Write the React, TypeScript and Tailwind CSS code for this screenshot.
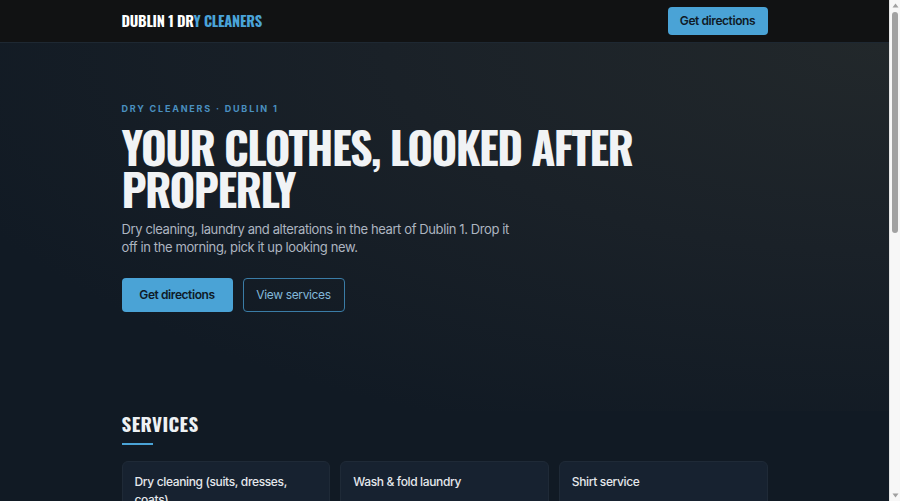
import React from "react";

const display = { fontFamily: "'Oswald', 'Liberation Sans Narrow', 'DejaVu Sans Condensed', sans-serif" };
const body = { fontFamily: "Inter, 'Noto Sans', sans-serif" };

function FakeScrollbar() {
  return (
    <div className="w-[11px] h-[501px] shrink-0 bg-[#f7f7f7] border-l border-[#e6e6e6] flex flex-col items-center">
      <svg width="7" height="5" viewBox="0 0 7 5" className="mt-[3px]">
        <path d="M3.5 0.5 L6.5 4.5 L0.5 4.5 Z" fill="#a0a0a0" />
      </svg>
      <div className="mt-[4px] h-[221px] w-[6px] rounded-full bg-[#a2a2a2]" />
      <div className="flex-1" />
      <svg width="7" height="5" viewBox="0 0 7 5" className="mb-[3px]">
        <path d="M0.5 0.5 L6.5 0.5 L3.5 4.5 Z" fill="#a0a0a0" />
      </svg>
    </div>
  );
}

export default function App() {
  return (
    <div className="flex h-[501px] overflow-hidden bg-[#111a24]">
      <main className="w-[889px] shrink-0 overflow-hidden text-white" style={body}>
        <header className="h-[43px] bg-[#111213] border-b border-[#1e2832]">
          <div className="mx-auto w-[646px] h-full flex items-center justify-between">
            <div className="text-[14.5px] font-bold tracking-[-0.015em] leading-none" style={display}>
              <span className="text-white">DUBLIN 1 DR</span>
              <span className="text-[#4aa3d8]">Y CLEANERS</span>
            </div>
            <button className="h-[28px] w-[100px] rounded-[4px] bg-[#4aa3d6] text-[#0f1a26] text-[12px] tracking-[-0.035em] font-semibold">
              Get directions
            </button>
          </div>
        </header>
        <section className="bg-[radial-gradient(ellipse_at_top_right,#22282b_0%,#1a2128_40%,#111a24_80%)]">
          <div className="mx-auto w-[646px] pt-[58px] pb-[99px]">
            <div className="text-[9px] font-bold tracking-[0.2em] text-[#4a90c0] leading-[16px]">
              DRY CLEANERS · DUBLIN 1
            </div>
            <h1 className="mt-[9px] text-[44px] font-bold tracking-[-0.035em] leading-[42px] text-[#f1f3f5]" style={display}>
              YOUR CLOTHES, LOOKED AFTER
              <br />
              PROPERLY
            </h1>
            <p className="mt-[10px] w-[400px] text-[13px] tracking-[-0.03em] leading-[18px] text-[#adb5c0]">
              Dry cleaning, laundry and alterations in the heart of Dublin 1. Drop it off in the morning, pick it up looking new.
            </p>
            <div className="mt-[22px] flex gap-[10px]">
              <button className="h-[34px] w-[111px] rounded-[4px] bg-[#4aa3d6] text-[#0f1a26] text-[12px] tracking-[-0.035em] font-semibold">
                Get directions
              </button>
              <button className="h-[34px] w-[102px] rounded-[4px] border border-[#3a7ca6] text-[#82b8da] text-[12px] tracking-[-0.03em]">
                View services
              </button>
            </div>
          </div>
        </section>
        <section className="mx-auto w-[646px]">
          <h2 className="text-[19px] font-bold tracking-[0.02em] leading-[24px] text-[#eef1f4]" style={display}>
            SERVICES
          </h2>
          <div className="mt-[8px] h-[2px] w-[31px] bg-[#4aa3d6]" />
          <div className="mt-[16px] grid grid-cols-3 gap-[10px]">
            {["Dry cleaning (suits, dresses, coats)", "Wash & fold laundry", "Shirt service"].map((t) => (
              <div key={t} className="h-[140px] rounded-[6px] border border-[#1f2a37] bg-[#172230] px-[12px] pt-[11px]">
                <div className="text-[12px] font-medium tracking-[-0.03em] leading-[18px] text-[#e5e8ec]">{t}</div>
              </div>
            ))}
          </div>
        </section>
      </main>
      <FakeScrollbar />
    </div>
  );
}
